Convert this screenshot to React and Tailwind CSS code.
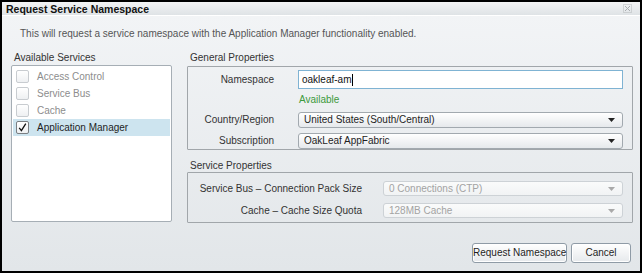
import React from 'react';

const services = [
    { name: 'Access Control', checked: false, enabled: false },
    { name: 'Service Bus', checked: false, enabled: false },
    { name: 'Cache', checked: false, enabled: false },
    { name: 'Application Manager', checked: true, enabled: true },
];

function Checkbox({ checked }) {
    return (
        <div className={`w-[13px] h-[13px] rounded-[2px] border flex items-center justify-center bg-gradient-to-b from-white to-[#eef0f2] ${checked ? 'border-[#7a7e82]' : 'border-[#c8ccd0]'}`}>
            {checked && (
                <svg width="11" height="11" viewBox="0 0 11 11">
                    <path d="M2.2 5.8 L4.4 8.6 L8.8 1.6" fill="none" stroke="#111" strokeWidth="1.3" />
                </svg>
            )}
        </div>
    );
}

function Select({ value, disabled }) {
    return (
        <div className={`h-full flex items-center justify-between pl-[5px] pr-[7px] rounded-[3px] border ${disabled ? 'border-[#cdd2d6] bg-gradient-to-b from-[#fafbfb] to-[#f1f3f4] text-[#a3a3a3]' : 'border-[#a2a9af] bg-gradient-to-b from-white to-[#e6e9ec] text-[#1e1e1e]'}`}>
            <span>{value}</span>
            <svg width="7" height="4" viewBox="0 0 7 4">
                <path d="M0 0 L7 0 L3.5 4 Z" fill={disabled ? '#a9a9a9' : '#222'} />
            </svg>
        </div>
    );
}

function Button({ children, className }) {
    return (
        <button className={`h-[20px] p-0 whitespace-nowrap rounded-[3px] border border-[#8f9ba6] bg-gradient-to-b from-white to-[#e6e9ec] text-[#1e1e1e] text-[10px] shadow-[inset_0_0_0_1px_#ffffff] ${className}`}>
            {children}
        </button>
    );
}

export default function App() {
    return (
        <div className="w-[642px] h-[273px] border-2 border-black flex flex-col text-[10px] leading-[12px] text-[#333]" style={{ fontFamily: '"Liberation Sans", Arial, sans-serif' }}>
            {/* title bar */}
            <div className="h-[14px] flex items-center justify-between pl-[4px] pr-[8px] bg-gradient-to-b from-[#f3f4f5] to-[#dfe3e6] border-b border-white">
                <span className="font-bold text-[10.5px] text-[#111]">Request Service Namespace</span>
                <svg width="9" height="9" viewBox="0 0 9 9">
                    <rect x="0.5" y="0.5" width="8" height="8" fill="none" stroke="#b4b8bb" strokeDasharray="1 1" />
                    <path d="M2 2 L7 7 M7 2 L2 7" stroke="#a9adb0" strokeWidth="1" />
                </svg>
            </div>

            <div className="flex-1 flex flex-col bg-gradient-to-b from-[#f2f4f6] to-[#e2e6e9]">
                <p className="mt-[12px] ml-[18px] text-[#555]">
                    This will request a service namespace with the Application Manager functionality enabled.
                </p>

                <div className="flex mt-[12px]">
                    {/* available services */}
                    <div className="ml-[9px] w-[161px] flex flex-col">
                        <div className="pl-[3px] h-[12px]">Available Services</div>
                        <div className="mt-[1px] h-[157px] bg-white border border-[#a6aeb5] rounded-[2px] pt-[2px] px-px">
                            {services.map(s => (
                                <div
                                    key={s.name}
                                    className={`h-[17px] flex items-center pl-[3px] ${s.checked ? 'bg-[#cde4ef] text-[#1e1e1e]' : 'text-[#8d8d8d]'}`}
                                >
                                    <Checkbox checked={s.checked} />
                                    <span className="ml-[8px]">{s.name}</span>
                                </div>
                            ))}
                        </div>
                    </div>

                    {/* properties */}
                    <div className="ml-[15px] w-[446px] flex flex-col">
                        <div className="pl-[3px] h-[12px]">General Properties</div>
                        <div className="mt-[2px] h-[84px] border border-[#a1a6aa] rounded-[1px] pt-[3px] pr-[9px] grid grid-cols-[86px_1fr] gap-x-[24px] items-center">
                            <div className="text-right h-[19px] leading-[19px]">Namespace</div>
                            <div className="h-[19px] border border-[#7fb3d3] bg-white flex items-center pl-[3px] text-[#111]">
                                oakleaf-am<span className="w-px h-[12px] bg-black ml-px" />
                            </div>
                            <div className="h-[12px] mt-[4px]" />
                            <div className="h-[12px] mt-[4px] pl-[1px] text-[#3c9a3c]">Available</div>
                            <div className="text-right h-[16px] leading-[16px] mt-[6px]">Country/Region</div>
                            <div className="h-[16px] mt-[6px]"><Select value="United States (South/Central)" /></div>
                            <div className="text-right h-[16px] leading-[16px] mt-[4px]">Subscription</div>
                            <div className="h-[16px] mt-[4px]"><Select value="OakLeaf AppFabric" /></div>
                        </div>

                        <div className="mt-[10px] pl-[3px] h-[12px]">Service Properties</div>
                        <div className="h-[51px] border border-[#a1a6aa] rounded-[1px] pt-[8px] pr-[9px] grid grid-cols-[174px_1fr] gap-x-[21px] gap-y-[7px] content-start">
                            <div className="text-right h-[15px] leading-[15px]">Service Bus – Connection Pack Size</div>
                            <div className="h-[15px]"><Select value="0 Connections (CTP)" disabled /></div>
                            <div className="text-right h-[15px] leading-[15px]">Cache – Cache Size Quota</div>
                            <div className="h-[15px]"><Select value="128MB Cache" disabled /></div>
                        </div>
                    </div>
                </div>

                <div className="mt-auto mb-[8px] mr-[9px] flex justify-end gap-[4px]">
                    <Button className="w-[95px]">Request Namespace</Button>
                    <Button className="w-[60px]">Cancel</Button>
                </div>
            </div>
        </div>
    );
}
